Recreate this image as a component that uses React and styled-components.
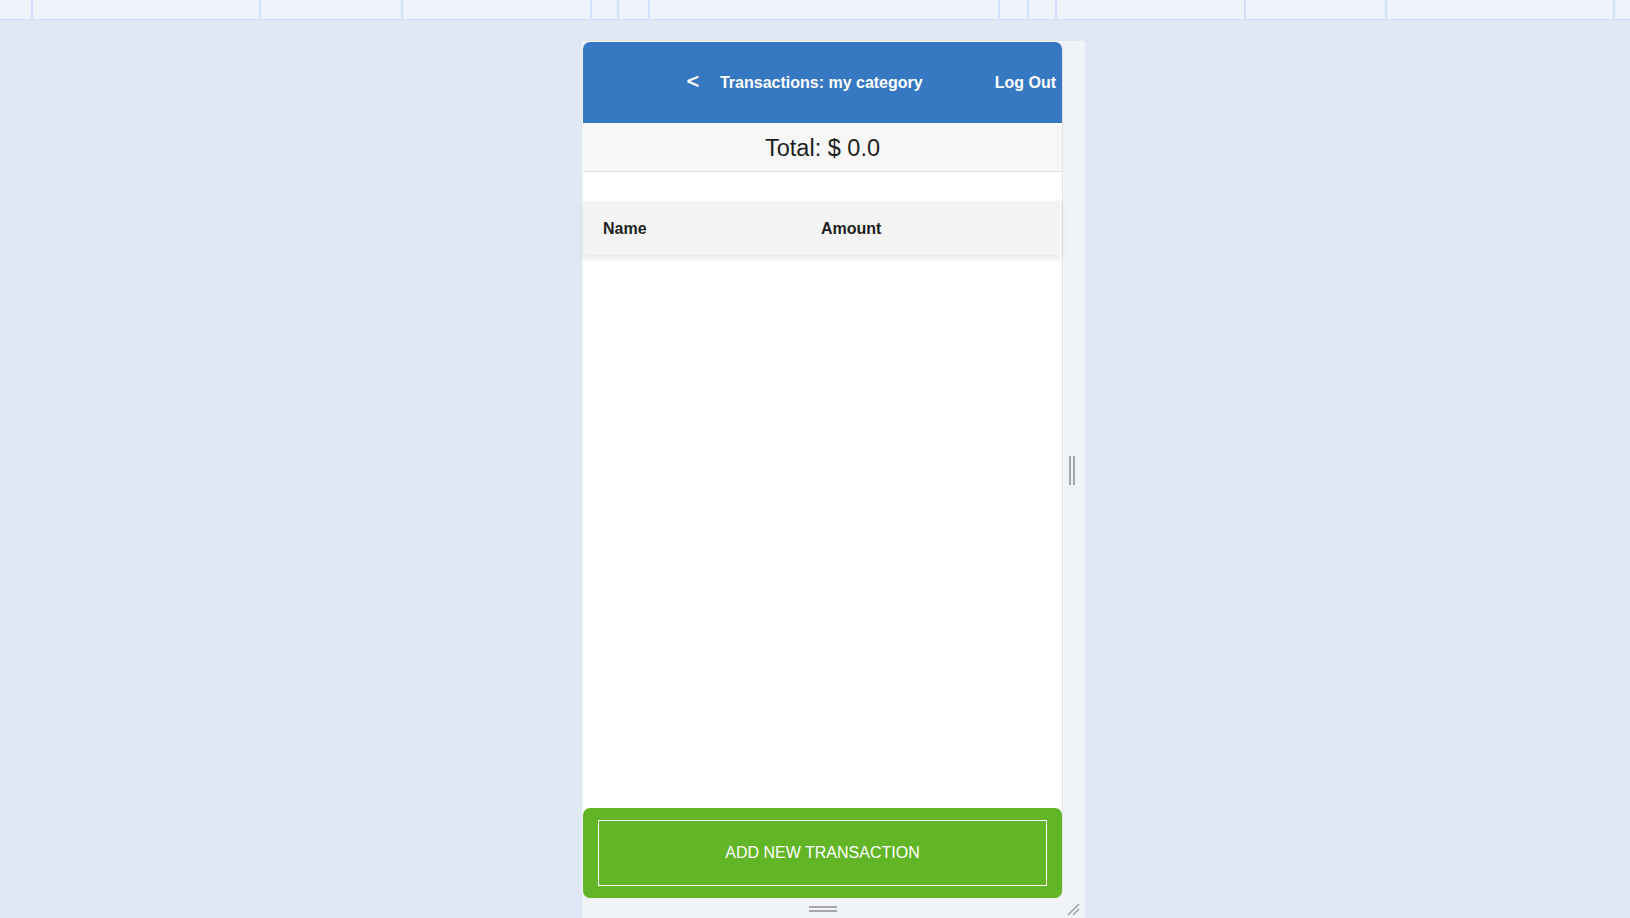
import React from "react";
import styled, { createGlobalStyle } from "styled-components";

const GlobalStyle = createGlobalStyle`
  html, body {
    margin: 0;
    padding: 0;
    height: 100%;
    overflow: hidden;
    background: #e1e8f5;
    font-family: "Liberation Sans", Arial, sans-serif;
  }
`;

const toolbarCells = [33, 228, 142, 189, 27, 31, 350, 29, 28, 189, 141, 228];

export default function App() {
  return (
    <>
      <GlobalStyle />
      <TopBar>
        {toolbarCells.map((w, i) => (
          <Cell key={i} style={{ width: w }} />
        ))}
      </TopBar>
      <Stage>
        <Frame>
          <Card>
            <Header>
              <Back>&lt;</Back>
              <Title>Transactions: my category</Title>
              <LogOut>Log Out</LogOut>
            </Header>
            <TotalRow>Total: $ 0.0</TotalRow>
            <TableHead>
              <span>Name</span>
              <span>Amount</span>
            </TableHead>
            <List />
            <Footer>
              <AddButton>ADD NEW TRANSACTION</AddButton>
            </Footer>
          </Card>
          <SideHandle>
            <i />
            <i />
          </SideHandle>
          <BottomHandle>
            <Grip />
            <Corner viewBox="0 0 14 14">
              <path d="M2 13 L13 2 M7 13 L13 7" stroke="#a0a0a0" strokeWidth="1.5" />
            </Corner>
          </BottomHandle>
        </Frame>
      </Stage>
    </>
  );
}

const TopBar = styled.div`
  height: 19px;
  display: flex;
  background: #eff3f9;
  border-bottom: 1px solid #cfdffa;
`;

const Cell = styled.div`
  height: 19px;
  box-sizing: border-box;
  border-right: 2px solid #d2e1fb;
`;

const Stage = styled.div`
  padding: 21px 0 0 582px;
`;

const Frame = styled.div`
  width: 503px;
  height: 877px;
  box-sizing: border-box;
  padding: 1px 0 0 1px;
  background: #f0f4f9;
  display: grid;
  grid-template-columns: 480px 21px;
  grid-template-rows: 856px 1fr;
`;

const Card = styled.div`
  display: flex;
  flex-direction: column;
  background: #ffffff;
  border-right: 1px solid #e4e4e4;
  border-radius: 7px;
`;

const Header = styled.header`
  height: 81px;
  flex-shrink: 0;
  display: flex;
  align-items: center;
  justify-content: flex-end;
  padding-right: 6px;
  background: #3778c2;
  border-radius: 7px 7px 0 0;
  color: #ffffff;
  font-weight: 700;
  font-size: 16px;
`;

const Back = styled.span`
  font-size: 21px;
  font-weight: 400;
  margin-right: 21px;
  margin-top: -3px;
  -webkit-text-stroke: 0.6px #ffffff;
`;

const Title = styled.span`
  margin-right: 72px;
`;

const LogOut = styled.span``;

const TotalRow = styled.div`
  height: 49px;
  flex-shrink: 0;
  box-sizing: border-box;
  padding-top: 2px;
  display: flex;
  align-items: center;
  justify-content: center;
  background: #f7f7f7;
  border-bottom: 1px solid #dedede;
  font-size: 23.5px;
  color: #1f1f1f;
  margin-bottom: 29px;
`;

const TableHead = styled.div`
  height: 54px;
  flex-shrink: 0;
  box-sizing: border-box;
  padding: 2px 0 0 20px;
  display: grid;
  grid-template-columns: 218px 1fr;
  align-items: center;
  background: #f4f4f4;
  box-shadow: 0 3px 6px rgba(0, 0, 0, 0.1);
  font-size: 16px;
  font-weight: 700;
  color: #1e1e1e;
  position: relative;
`;

const List = styled.div`
  flex: 1;
`;

const Footer = styled.div`
  height: 90px;
  flex-shrink: 0;
  box-sizing: border-box;
  padding: 12px 15px;
  background: #62b526;
  border-radius: 7px;
  display: flex;
`;

const AddButton = styled.button`
  flex: 1;
  background: transparent;
  border: 1px solid #ffffff;
  color: #ffffff;
  font-family: "Liberation Sans", Arial, sans-serif;
  font-size: 16px;
  cursor: pointer;
`;

const SideHandle = styled.div`
  display: flex;
  align-items: center;
  justify-content: center;
  gap: 2px;
  padding-right: 4px;

  i {
    display: block;
    width: 2px;
    height: 29px;
    background: #a6a6a6;
  }
`;

const BottomHandle = styled.div`
  grid-column: 1 / 3;
  position: relative;
  display: flex;
  justify-content: center;
  padding: 8px 22px 0 0;
`;

const Grip = styled.div`
  width: 28px;
  height: 2px;
  border-top: 2px solid #a6a6a6;
  border-bottom: 2px solid #a6a6a6;
  box-sizing: content-box;
`;

const Corner = styled.svg`
  position: absolute;
  right: 4px;
  top: 4px;
  width: 14px;
  height: 14px;
`;
